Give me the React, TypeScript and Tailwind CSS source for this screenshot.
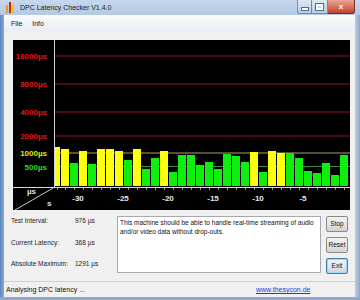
import React from "react";

type Bar = ["y" | "g", number];

// top edge of each one-second bar, in page pixels (baseline is 186)
const BARS: Bar[] = [
  ["y", 147], ["y", 149], ["g", 163], ["y", 151], ["g", 164], ["y", 149], ["y", 149],
  ["y", 151], ["g", 160], ["y", 149], ["g", 169], ["g", 158], ["y", 151], ["g", 172],
  ["g", 155], ["g", 155], ["g", 165], ["g", 162], ["g", 169], ["g", 154], ["g", 156],
  ["g", 162], ["y", 152], ["g", 172], ["y", 151], ["y", 153], ["g", 153], ["g", 158],
  ["g", 171], ["g", 173], ["g", 163], ["g", 175], ["g", 155],
];

const GRID = [
  { y: 16, label: "16000µs", line: "#8a1424", text: "#e01818" },
  { y: 44, label: "8000µs", line: "#8a1424", text: "#e01818" },
  { y: 72, label: "4000µs", line: "#8a1424", text: "#e01818" },
  { y: 96, label: "2000µs", line: "#8a1424", text: "#e01818" },
  { y: 113, label: "1000µs", line: "#a8a468", text: "#e4e41c" },
  { y: 126.5, label: "500µs", line: "#3f8a3f", text: "#22dd22" },
];

const SECONDS = [
  { x: 65, t: "-30" },
  { x: 110, t: "-25" },
  { x: 155, t: "-20" },
  { x: 200, t: "-15" },
  { x: 245, t: "-10" },
  { x: 290, t: "-5" },
];

function LatencyChart() {
  const font = "'Liberation Sans', Arial, sans-serif";
  return (
    <div className="h-[170px] w-[337px] bg-black">
      <svg width={337} height={170} viewBox="0 0 337 170">
        {GRID.map((g) => (
          <g key={g.label}>
            <line x1={42} x2={337} y1={g.y} y2={g.y} stroke={g.line} strokeWidth={1} />
            <text
              x={34}
              y={g.y + 3}
              textAnchor="end"
              fontFamily={font}
              fontWeight="bold"
              fontSize={8}
              fill={g.text}
            >
              {g.label}
            </text>
          </g>
        ))}
        {BARS.map(([c, top], i) => {
          const x = i === 0 ? 42 : 48 + (i - 1) * 9;
          const w = i === 0 ? 5 : 8;
          const h = 186 - top;
          return (
            <rect
              key={i}
              x={x}
              y={146 - h}
              width={w}
              height={h}
              fill={c === "y" ? "#ffff10" : "#10ee10"}
            />
          );
        })}
        {BARS.map((_, i) => {
          const x = i === 0 ? 44.5 : 52.5 + (i - 1) * 9;
          return <line key={i} x1={x} x2={x} y1={147} y2={150} stroke="#9a9a9a" strokeWidth={1} />;
        })}
        <line x1={41.5} x2={41.5} y1={0} y2={147} stroke="#d8d8d8" strokeWidth={1} />
        <line x1={0} x2={337} y1={147.5} y2={147.5} stroke="#d8d8d8" strokeWidth={1} />
        <line x1={2} x2={41} y1={170} y2={147.5} stroke="#c8c8c8" strokeWidth={1} />
        <text x={14} y={154} fontFamily={font} fontWeight="bold" fontSize={8} fill="#e0e0e0">
          µs
        </text>
        <text x={34} y={166} fontFamily={font} fontWeight="bold" fontSize={8} fill="#e0e0e0">
          s
        </text>
        {SECONDS.map((s) => (
          <text
            key={s.t}
            x={s.x}
            y={161}
            textAnchor="middle"
            fontFamily={font}
            fontWeight="bold"
            fontSize={8}
            fill="#e8e8e8"
          >
            {s.t}
          </text>
        ))}
      </svg>
    </div>
  );
}

function AppIcon() {
  return (
    <svg width={9} height={11} viewBox="0 0 9 11">
      <rect x={0} y={3} width={2} height={8} fill="#e8a020" />
      <rect x={3} y={0} width={2} height={11} fill="#d02010" />
      <rect x={6} y={2} width={2} height={9} fill="#f0c020" />
    </svg>
  );
}

function TitleBar() {
  return (
    <div className="flex h-[15px] items-stretch bg-gradient-to-b from-[#c6d8ed] to-[#b3c9e3]">
      <div className="flex w-[18px] items-center justify-center pl-[2px]">
        <AppIcon />
      </div>
      <div className="flex flex-1 items-center pl-[2px] text-[7px] leading-none text-[#1a1a1a] [font-family:'Liberation_Sans',Arial,sans-serif]">
        DPC Latency Checker V1.4.0
      </div>
      <div className="mr-[5px] flex items-start">
        <div className="flex h-[14px] w-[15px] items-center justify-center rounded-bl-[3px] border border-t-0 border-[#6f8bb0] bg-gradient-to-b from-[#dfe9f5] to-[#b8cbe3]">
          <div className="mt-[4px] h-[2px] w-[6px] bg-white shadow-[0_0_0_1px_#536b8c]" />
        </div>
        <div className="flex h-[14px] w-[16px] items-center justify-center border border-l-0 border-t-0 border-[#6f8bb0] bg-gradient-to-b from-[#dfe9f5] to-[#b8cbe3]">
          <div className="h-[6px] w-[7px] border-2 border-t-[2px] border-white shadow-[0_0_0_1px_#536b8c]" />
        </div>
        <div className="flex h-[14px] w-[27px] items-center justify-center rounded-br-[3px] border border-l-0 border-t-0 border-[#7a2a22] bg-gradient-to-b from-[#e8a497] to-[#c4402a]">
          <span className="text-[8px] font-bold leading-none text-white [font-family:'Liberation_Sans',Arial,sans-serif]">
            x
          </span>
        </div>
      </div>
    </div>
  );
}

function WinButton({ label, focused }: { label: string; focused?: boolean }) {
  return (
    <div
      className={`flex h-[16px] w-[22px] items-center justify-center rounded-[2px] border bg-gradient-to-b from-[#f3f3f3] via-[#e6e6e6] to-[#d2d2d2] text-[6.5px] text-[#111] ${
        focused ? "border-[#3c7fb1] shadow-[inset_0_0_0_1px_#9fd6f4]" : "border-[#8a8a8a]"
      }`}
    >
      {label}
    </div>
  );
}

function StatRow({ label, value }: { label: string; value: string }) {
  return (
    <div className="flex h-[10px] items-center leading-none">
      <span className="w-[64px]">{label}</span>
      <span>{value}</span>
    </div>
  );
}

export default function App() {
  return (
    <div className="flex h-[300px] w-[360px] flex-col overflow-hidden bg-[#a8bfdc] [font-family:'Liberation_Sans',Arial,sans-serif]">
      <TitleBar />
      <div className="flex min-h-0 flex-1">
        <div className="w-[4px] bg-gradient-to-r from-[#5d86bb] to-[#8aaad2]" />
        <div className="flex w-[351px] flex-col bg-[#f0f0f0]">
          <div className="flex h-[16px] items-center gap-[10px] bg-gradient-to-b from-[#fbfcfd] to-[#e9eef5] pl-[7px] text-[7px] leading-none text-[#111]">
            <span>File</span>
            <span>Info</span>
          </div>
          <div className="pl-[9px] pt-[9px]">
            <LatencyChart />
          </div>
          <div className="flex h-[71px] pl-[7px] pr-[7px] pt-[6px] text-[6.5px] text-[#222]">
            <div className="flex w-[106px] flex-col pt-0">
              <StatRow label="Test Interval:" value="976 µs" />
              <div className="mt-[12px]">
                <StatRow label="Current Latency:" value="368 µs" />
              </div>
              <div className="mt-[11px]">
                <StatRow label="Absolute Maximum:" value="1291 µs" />
              </div>
            </div>
            <div className="h-[57px] w-[204px] border border-[#a6a9b0] bg-white px-[2px] pt-[1px] text-[6.5px] leading-[9px] text-[#111]">
              This machine should be able to handle real-time streaming of audio and/or video data
              without drop-outs.
            </div>
            <div className="ml-[5px] flex flex-col gap-[5px]">
              <WinButton label="Stop" />
              <WinButton label="Reset" />
              <WinButton label="Exit" focused />
            </div>
          </div>
          <div className="flex h-[16px] items-center border-t border-[#d0d0d0] text-[7px] leading-none text-[#111]">
            <span className="w-[252px] pl-[2px]">Analysing DPC latency ...</span>
            <span className="text-[#1a3fd8] underline">www.thesycon.de</span>
          </div>
        </div>
        <div className="w-[5px] bg-gradient-to-r from-[#b9cde6] to-[#8ea9cc]" />
      </div>
      <div className="h-[3px] bg-[#8fa9cb]" />
    </div>
  );
}
